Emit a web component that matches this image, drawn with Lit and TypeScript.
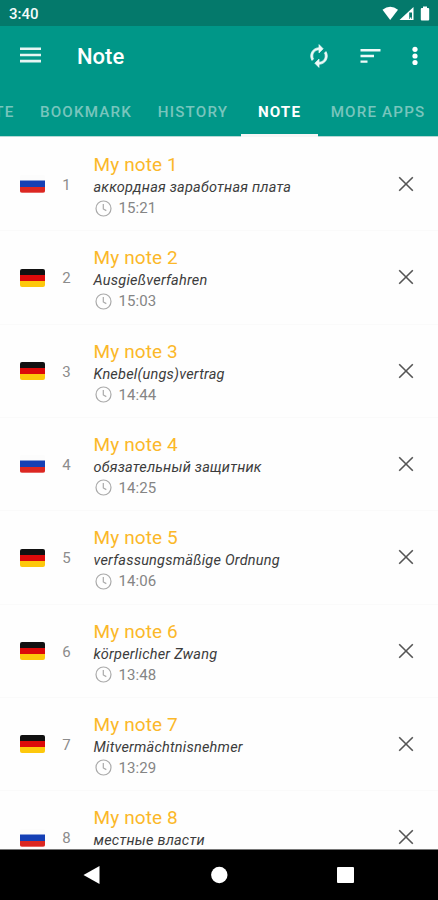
import { LitElement, html, svg, css } from "lit";
import { customElement, property } from "lit/decorators.js";
import { classMap } from "lit/directives/class-map.js";

interface Note {
  lang: "ru" | "de";
  text: string;
  time: string;
}

const NOTES: Note[] = [
  { lang: "ru", text: "аккордная заработная плата", time: "15:21" },
  { lang: "de", text: "Ausgießverfahren", time: "15:03" },
  { lang: "de", text: "Knebel(ungs)vertrag", time: "14:44" },
  { lang: "ru", text: "обязательный защитник", time: "14:25" },
  { lang: "de", text: "verfassungsmäßige Ordnung", time: "14:06" },
  { lang: "de", text: "körperlicher Zwang", time: "13:48" },
  { lang: "de", text: "Mitvermächtnisnehmer", time: "13:29" },
  { lang: "ru", text: "местные власти", time: "" },
];

const TABS = ["TE", "BOOKMARK", "HISTORY", "NOTE", "MORE APPS"];

const FLAGS = {
  ru: svg`<rect y="0" width="25" height="6" fill="#fcfcfc"/><rect y="5.5" width="25" height="6.5" fill="#1540b5"/><rect y="12" width="25" height="5.7" fill="#dc2722"/>`,
  de: svg`<rect width="25" height="6" fill="#111"/><rect y="6" width="25" height="6" fill="#dc0a0a"/><rect y="12" width="25" height="6" fill="#fdc80c"/>`,
};

@customElement("note-row")
export class NoteRow extends LitElement {
  @property({ attribute: false }) note!: Note;
  @property({ type: Number }) index = 1;

  static styles = css`
    :host {
      display: flex;
      align-items: flex-start;
      box-sizing: border-box;
      height: 93.33px;
      flex: none;
      border-bottom: 1px solid #fafafa;
    }
    .flag {
      width: 25px;
      height: 18px;
      margin: 37.4px 0 0 20px;
      border-radius: 2px;
      flex: none;
    }
    .index {
      width: 43px;
      margin-top: 37px;
      font-size: 15px;
      line-height: 20px;
      text-align: center;
      color: #8c8c8c;
    }
    .body {
      flex: 1;
      margin: 15px 0 0 5.5px;
      white-space: nowrap;
    }
    .title {
      font-size: 19px;
      line-height: 24px;
      letter-spacing: 0.12px;
      color: #fbb829;
    }
    .text {
      font-size: 14.5px;
      line-height: 21px;
      letter-spacing: 0.22px;
      font-style: italic;
      color: #3c3c3c;
    }
    .time {
      display: flex;
      align-items: center;
      height: 20px;
      gap: 7px;
      padding-left: 1px;
      font-size: 15px;
      letter-spacing: 0.1px;
      color: #858585;
    }
    .clock {
      width: 17px;
      height: 17px;
    }
    .close {
      width: 16px;
      height: 16px;
      margin: 38px 24px 0 0;
      flex: none;
    }
  `;

  render() {
    return html`
      <svg class="flag" viewBox="0 0 25 18">${FLAGS[this.note.lang]}</svg>
      <div class="index">${this.index}</div>
      <div class="body">
        <div class="title">My note ${this.index}</div>
        <div class="text">${this.note.text}</div>
        ${this.note.time
          ? html`<div class="time">
              <svg class="clock" viewBox="0 0 17 17" fill="none" stroke="#aaa" stroke-width="1.2">
                <circle cx="8.5" cy="8.5" r="7.5" />
                <path d="M8.3 4v5l3 1.6" />
              </svg>
              <span>${this.note.time}</span>
            </div>`
          : null}
      </div>
      <svg class="close" viewBox="0 0 16 16" stroke="#555" stroke-width="1.6">
        <path d="M1.2 1.2l13.6 13.6M14.8 1.2L1.2 14.8" />
      </svg>
    `;
  }
}

@customElement("app-root")
export class AppRoot extends LitElement {
  static styles = css`
    :host {
      display: flex;
      flex-direction: column;
      width: 438px;
      height: 900px;
      overflow: hidden;
      background: #fefefe;
      font-family: Roboto, "Liberation Sans", sans-serif;
    }
    .status {
      display: flex;
      align-items: center;
      justify-content: space-between;
      height: 26px;
      flex: none;
      box-sizing: border-box;
      padding: 2px 7px 0 9px;
      background: #04796b;
      color: #f4fbfa;
      font-size: 15px;
      font-weight: 500;
    }
    .status svg {
      width: 50px;
      height: 16px;
    }
    .bar {
      display: flex;
      align-items: center;
      height: 61px;
      flex: none;
      background: #009788;
      color: #fff;
    }
    .menu {
      width: 21px;
      height: 16px;
      margin: -3px 0 0 20px;
    }
    .heading {
      flex: 1;
      margin-left: 36px;
      font-size: 22px;
      font-weight: 500;
    }
    .refresh {
      width: 20px;
      height: 24px;
      margin: -2px 31px 0 0;
    }
    .sort {
      width: 21px;
      height: 16px;
      margin: -2px 31px 0 0;
    }
    .more {
      width: 6px;
      height: 20px;
      margin: -2px 20px 0 0;
    }
    .tabs {
      display: grid;
      grid-template-columns: 27px 118px 96px 77px 120px;
      height: 49px;
      flex: none;
      background: #009788;
      border-bottom: 1px solid #b5d9d5;
      color: #78c5bd;
      font-size: 15.2px;
      font-weight: 500;
      letter-spacing: 1.15px;
      line-height: 50px;
      white-space: nowrap;
    }
    .tab {
      display: flex;
      justify-content: center;
      box-sizing: border-box;
      height: 50px;
    }
    .tab.cut {
      justify-content: flex-end;
      padding-right: 12.5px;
    }
    .tab.active {
      color: #fff;
      font-weight: 700;
      border-bottom: 3px solid #f6f6f6;
    }
    .list {
      display: flex;
      flex-direction: column;
      flex: 1;
      min-height: 0;
      overflow: hidden;
      padding-top: 1px;
    }
    .nav {
      height: 51px;
      flex: none;
      background: #000;
      border-top: 1px solid #777;
      box-sizing: border-box;
    }
    .nav svg {
      display: block;
    }
  `;

  render() {
    return html`
      <div class="status">
        <span>3:40</span>
        <svg viewBox="0 0 50 16" fill="#fff">
          <path d="M1.5 3.8Q9.2-2.2 17 3.8L9.2 14z" />
          <path fill-rule="evenodd" d="M18.5 14L32.5 1V14zM28.2 6.5V13H31V6.5z" />
          <path d="M28.8 11.5h1.6V13h-1.6z" />
          <path d="M42 .5h4V2h1.2q1 0 1 1v10.5q0 1-1 1h-6.4q-1 0-1-1V3q0-1 1-1H42z" />
        </svg>
      </div>
      <div class="bar">
        <svg class="menu" viewBox="0 0 21 16" fill="#e6f5f3">
          <path d="M0 .5h21v2.6H0zM0 6.7h21v2.6H0zM0 12.8h21v2.6H0z" />
        </svg>
        <div class="heading">Note</div>
        <svg class="refresh" viewBox="2.6 0.4 18.8 23.2" fill="#eefaf8" stroke="#eefaf8" stroke-width="0.7">
          <path d="M12 4V1L8 5l4 4V6c3.31 0 6 2.69 6 6 0 1.01-.25 1.97-.7 2.8l1.46 1.46C19.54 15.03 20 13.57 20 12c0-4.42-3.58-8-8-8zm0 14c-3.31 0-6-2.69-6-6 0-1.01.25-1.97.7-2.8L5.24 7.74C4.46 8.97 4 10.43 4 12c0 4.42 3.58 8 8 8v3l4-4-4-4v3z" transform="matrix(-1 0 0 1 24 0)" />
        </svg>
        <svg class="sort" viewBox="0 0 21 16" fill="#eefaf8">
          <path d="M.5 1h20v2.4H.5zM.5 6.8h13.5v2.4H.5zM.5 12.4h7v2.4h-7z" />
        </svg>
        <svg class="more" viewBox="0 0 6 20" fill="#fff">
          <circle cx="3" cy="3.3" r="2.6" />
          <circle cx="3" cy="10" r="2.6" />
          <circle cx="3" cy="16.5" r="2.6" />
        </svg>
      </div>
      <div class="tabs">
        ${TABS.map(
          (t, i) => html`<div class=${classMap({ tab: true, cut: i === 0, active: t === "NOTE" })}>${t}</div>`
        )}
      </div>
      <div class="list">
        ${NOTES.map((n, i) => html`<note-row .note=${n} .index=${i + 1}></note-row>`)}
      </div>
      <div class="nav">
        <svg width="438" height="50" viewBox="0 0 438 50" fill="#fff">
          <path d="M83.5 25L99.5 16V34z" />
          <circle cx="219.3" cy="25" r="8.2" />
          <rect x="337" y="17" width="17" height="16" rx="1" />
        </svg>
      </div>
    `;
  }
}
